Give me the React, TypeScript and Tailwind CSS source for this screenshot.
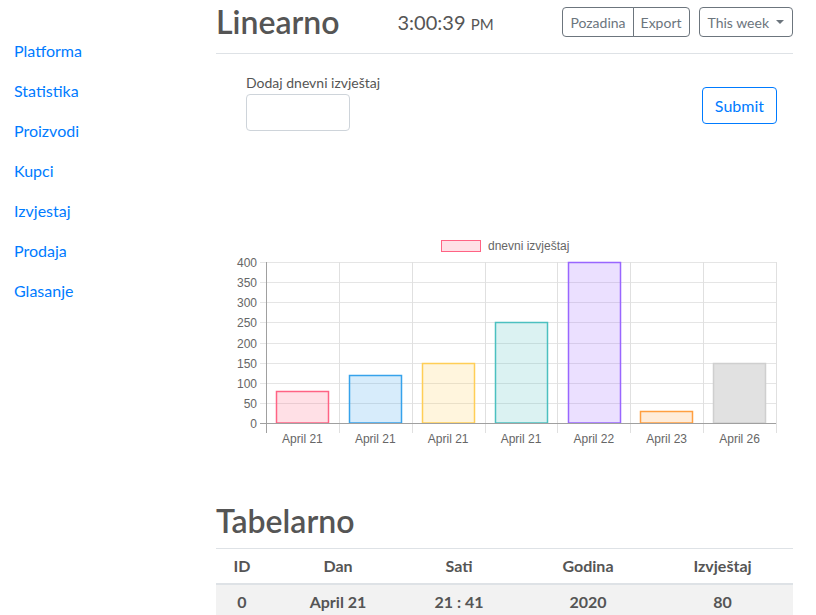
import React from 'react';

const links = ['Platforma', 'Statistika', 'Proizvodi', 'Kupci', 'Izvjestaj', 'Prodaja', 'Glasanje'];

const bars = [
  { label: 'April 21', value: 80, fill: 'rgba(255,99,132,0.2)', stroke: 'rgb(255,99,132)' },
  { label: 'April 21', value: 120, fill: 'rgba(54,162,235,0.2)', stroke: 'rgb(54,162,235)' },
  { label: 'April 21', value: 150, fill: 'rgba(255,206,86,0.2)', stroke: 'rgb(255,206,86)' },
  { label: 'April 21', value: 250, fill: 'rgba(75,192,192,0.2)', stroke: 'rgb(75,192,192)' },
  { label: 'April 22', value: 400, fill: 'rgba(153,102,255,0.2)', stroke: 'rgb(153,102,255)' },
  { label: 'April 23', value: 30, fill: 'rgba(255,159,64,0.2)', stroke: 'rgb(255,159,64)' },
  { label: 'April 26', value: 150, fill: '#e1e1e1', stroke: '#cfcfcf' },
];

const rows = [{ id: 0, dan: 'April 21', sati: '21 : 41', godina: 2020, izvjestaj: 80 }];

function Chart() {
  // chart area in svg coordinates
  const left = 50;
  const right = 560;
  const top = 32;
  const bottom = 193;
  const step = (bottom - top) / 8;
  const cat = (right - left) / bars.length;
  const bw = cat * 0.72;
  const ticks = [400, 350, 300, 250, 200, 150, 100, 50, 0];

  return (
    <svg width={577} height={230} className="block" style={{ fontFamily: 'Arial, "Liberation Sans", sans-serif' }}>
      {/* legend */}
      <rect x={225.5} y={10.5} width={39} height={11} fill="rgba(255,99,132,0.2)" stroke="rgb(255,99,132)" strokeWidth={1} />
      <text x={272} y={20} fontSize={12} fill="#666">dnevni izvještaj</text>

      {/* horizontal grid */}
      {ticks.map((t, i) => {
        const y = Math.round(top + i * step) + 0.5;
        return (
          <g key={t}>
            <line x1={left - 6} x2={right} y1={y} y2={y} stroke={t === 0 ? '#a0a0a0' : '#e5e5e5'} />
            <text x={left - 9} y={y + 4} fontSize={12} fill="#666" textAnchor="end">{t}</text>
          </g>
        );
      })}

      {/* vertical grid */}
      {Array.from({ length: bars.length + 1 }).map((_, i) => {
        const x = Math.round(left + i * cat) + 0.5;
        return (
          <line key={i} x1={x} x2={x} y1={top} y2={bottom + 10} stroke={i === 0 ? '#a0a0a0' : '#e0e0e0'} />
        );
      })}

      {/* bars */}
      {bars.map((b, i) => {
        const cx = left + i * cat + cat / 2;
        const h = (b.value / 400) * (bottom - top);
        return (
          <g key={i}>
            <rect
              x={Math.round(cx - bw / 2) + 0.5}
              y={Math.round(bottom - h) + 0.5}
              width={Math.round(bw)}
              height={Math.round(h) - 0.5}
              fill={b.fill}
              stroke={b.stroke}
              strokeWidth={1.5}
            />
            <text x={cx} y={213} fontSize={12} fill="#666" textAnchor="middle">{b.label}</text>
          </g>
        );
      })}
      <line x1={left} x2={right} y1={bottom + 0.5} y2={bottom + 0.5} stroke="#a0a0a0" />
    </svg>
  );
}

export default function App() {
  return (
    <div className="flex min-h-[615px] bg-white text-[#555]" style={{ fontFamily: 'Lato, "Open Sans", sans-serif' }}>
      {/* Sidebar */}
      <nav className="w-[200px] shrink-0 pt-[31px]">
        {links.map((l) => (
          <a key={l} href="#" className="block px-[14px] py-2 text-base leading-6 text-[#007bff]">
            {l}
          </a>
        ))}
      </nav>

      {/* Main */}
      <main className="ml-4 w-[577px]">
        <div className="flex h-[54px] items-center border-b border-[#dee2e6] pb-[9px]">
          <h1 className="text-[32px] font-semibold leading-[1.2] text-[#555]">Linearno</h1>
          <div className="ml-[58px] text-[20px] leading-none text-[#555]">
            3:00:39 <span className="text-[15px]">PM</span>
          </div>
          <div className="ml-auto flex items-center gap-[9px]">
            <div className="flex">
              <button className="h-[30px] rounded-l-[4px] border border-[#6c757d] px-[7px] text-[14px] text-[#6c757d]">
                Pozadina
              </button>
              <button className="-ml-px h-[30px] rounded-r-[4px] border border-[#6c757d] px-[7px] text-[14px] text-[#6c757d]">
                Export
              </button>
            </div>
            <button className="flex h-[30px] items-center gap-[7px] rounded-[4px] border border-[#6c757d] px-[8px] text-[14px] text-[#6c757d]">
              This week
              <span className="h-0 w-0 border-x-[4px] border-t-[4px] border-x-transparent border-t-[#6c757d]" />
            </button>
          </div>
        </div>

        {/* Form */}
        <div className="mt-[19px] flex items-start pl-[30px] pr-4">
          <div>
            <label className="block text-[14px] leading-5 text-[#555]">Dodaj dnevni izvještaj</label>
            <input className="mt-px block h-[37px] w-[104px] rounded-[4px] border border-[#ced4da] outline-none" />
          </div>
          <button className="ml-auto mt-[14px] h-[37px] rounded-[4px] border border-[#007bff] px-[12px] text-base text-[#007bff]">
            Submit
          </button>
        </div>

        {/* Chart */}
        <div className="mt-[99px]">
          <Chart />
        </div>

        {/* Table */}
        <h2 className="mt-[42px] text-[32px] font-semibold leading-[38px] text-[#555]">Tabelarno</h2>
        <table className="mt-[8px] w-full border-collapse text-center text-base font-bold text-[#555]">
          <thead>
            <tr className="border-t border-[#dee2e6]">
              <th className="w-[52px] border-b-2 border-[#dee2e6] py-[5px]">ID</th>
              <th className="w-[140px] border-b-2 border-[#dee2e6] py-[5px]">Dan</th>
              <th className="w-[102px] border-b-2 border-[#dee2e6] py-[5px]">Sati</th>
              <th className="w-[156px] border-b-2 border-[#dee2e6] py-[5px]">Godina</th>
              <th className="border-b-2 border-[#dee2e6] py-[5px] pr-[14px]">Izvještaj</th>
            </tr>
          </thead>
          <tbody>
            {rows.map((r) => (
              <tr key={r.id} className="bg-[#f2f2f2]">
                <td className="py-[5px]">{r.id}</td>
                <td className="py-[5px]">{r.dan}</td>
                <td className="py-[5px]">{r.sati}</td>
                <td className="py-[5px]">{r.godina}</td>
                <td className="py-[5px] pr-[14px]">{r.izvjestaj}</td>
              </tr>
            ))}
          </tbody>
        </table>
      </main>
    </div>
  );
}
